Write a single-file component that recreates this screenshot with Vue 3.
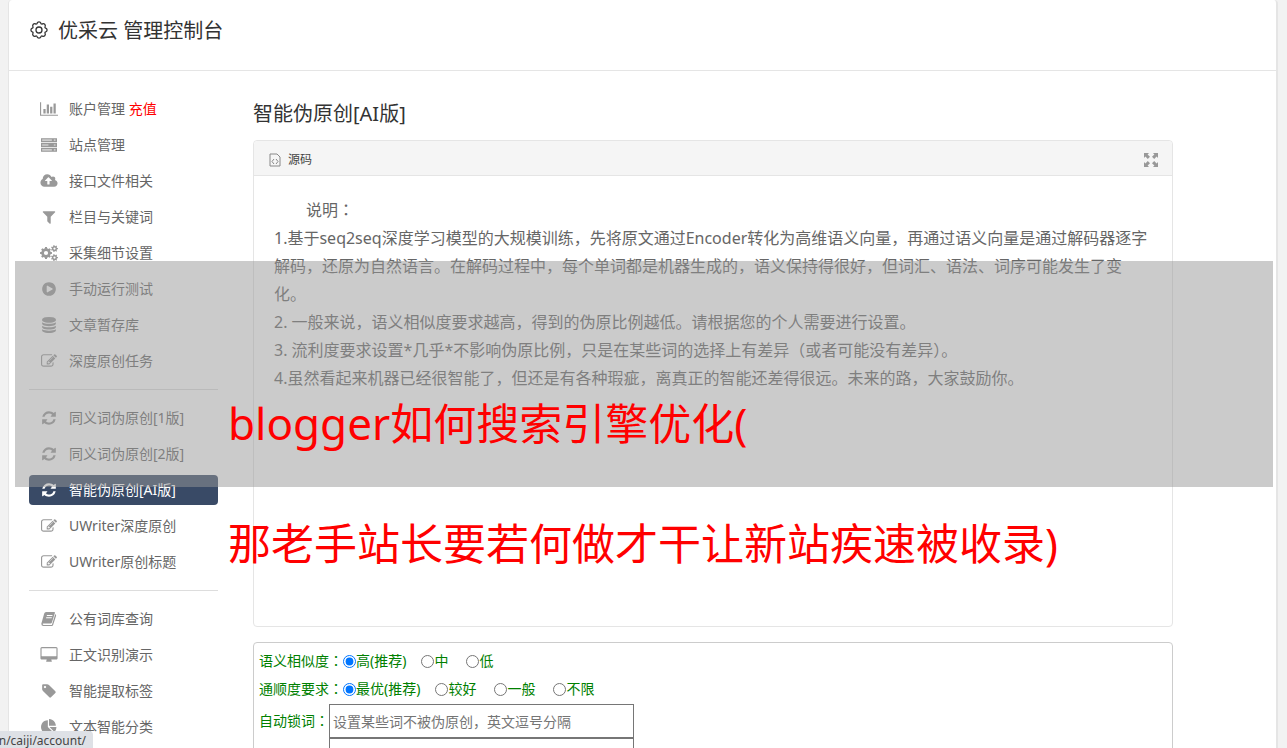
<script setup>
const icons = {
  chart: { box: '0 0 2048 1792', d: 'M640 896v512h-256v-512h256zm384-512v1024h-256v-1024h256zm1024 1152v128h-2048v-1536h128v1408h1920zm-640-896v768h-256v-768h256zm384-384v1152h-256v-1152h256z' },
  server: { box: '0 0 1792 1792', soft: 'M64 192h1664v320h-1664zM64 736h1664v320h-1664zM64 1280h1664v320h-1664z', d: 'M0 128h1792v448h-1792zM128 256v192h1088v-192zM1440 256v192h192v-192zM0 672h1792v448h-1792zM128 800v192h704v-192zM1440 800v192h192v-192zM0 1216h1792v448h-1792zM128 1344v192h1088v-192zM1440 1344v192h192v-192z' },
  cloud: { box: '0 0 1920 1792', d: 'M1280 864q0-14-9-23l-352-352q-9-9-23-9t-23 9l-351 351q-10 12-10 24 0 14 9 23t23 9h224v352q0 13 9.500 22.500t22.500 9.500h192q13 0 22.500-9.500t9.500-22.500v-352h224q13 0 22.500-9.500t9.500-22.500zm640 288q0 159-112.500 271.500t-271.500 112.500h-1088q-185 0-316.500-131.500t-131.500-316.500q0-130 70-240t188-165q-2-30-2-43 0-212 150-362t362-150q156 0 285.500 87t188.500 231q71-62 166-62 106 0 181 75t75 181q0 76-41 138 130 31 213.500 135.500t83.500 238.500z' },
  filter: { box: '0 0 1792 1792', d: 'M1595 295q17 41-14 70l-493 493v742q0 42-39 59-13 5-25 5-27 0-45-19l-256-256q-19-19-19-45v-486l-493-493q-31-29-14-70 17-39 59-39h1280q42 0 59 39z' },
  cogs: { box: '0 0 18 16', d: '' },
  play: { box: '0 0 1792 1792', d: 'M896 128q209 0 385.500 103t279.500 279.500 103 385.500-103 385.500-279.500 279.500-385.500 103-385.500-103-279.500-279.500-103-385.500 103-385.500 279.500-279.500 385.500-103zm384 823q32-18 32-55t-32-55l-544-320q-31-19-64-1-32 19-32 56v640q0 37 32 56 16 8 32 8 17 0 32-9z' },
  database: { box: '0 0 1792 1792', d: 'M896 768q237 0 443-43t325-127v170q0 69-103 128t-280 93.500-385 34.500-385-34.500-280-93.500-103-128v-170q119 84 325 127t443 43zm0 768q237 0 443-43t325-127v170q0 69-103 128t-280 93.500-385 34.500-385-34.500-280-93.500-103-128v-170q119 84 325 127t443 43zm0-384q237 0 443-43t325-127v170q0 69-103 128t-280 93.500-385 34.500-385-34.500-280-93.500-103-128v-170q119 84 325 127t443 43zm0-1152q208 0 385 34.500t280 93.500 103 128v128q0 69-103 128t-280 93.500-385 34.500-385-34.500-280-93.500-103-128v-128q0-69 103-128t280-93.500 385-34.500z' },
  edit: { box: '0 0 1792 1792', d: 'M888 1184l116-116-152-152-116 116v56h96v96h56zm440-720q-16-16-33 1l-350 350q-17 17-1 33t33-1l350-350q17-17 1-33zm80 594v190q0 119-84.500 203.500t-203.500 84.500h-832q-119 0-203.500-84.500t-84.500-203.500v-832q0-119 84.500-203.500t203.500-84.500h832q63 0 117 25 15 7 18 23 3 17-9 29l-49 49q-14 14-32 8-23-6-45-6h-832q-66 0-113 47t-47 113v832q0 66 47 113t113 47h832q66 0 113-47t47-113v-126q0-13 9-22l64-64q15-15 35-7t20 29zm-96-738l288 288-672 672h-288v-288zm444 132l-92 92-288-288 92-92q28-28 68-28t68 28l152 152q28 28 28 68t-28 68z' },
  refresh: { box: '0 0 1792 1792', d: 'M1639 1056q0 5-1 7-64 268-268 434.500t-478 166.500q-146 0-282.500-55t-243.500-157l-129 129q-19 19-45 19t-45-19-19-45v-448q0-26 19-45t45-19h448q26 0 45 19t19 45-19 45l-137 137q71 66 161 102t187 36q134 0 250-65t186-179q11-17 53-117 8-23 30-23h192q13 0 22.500 9.500t9.500 22.500zm25-800v448q0 26-19 45t-45 19h-448q-26 0-45-19t-19-45 19-45l138-138q-148-137-349-137-134 0-250 65t-186 179q-11 17-53 117-8 23-30 23h-199q-13 0-22.500-9.500t-9.500-22.500v-7q65-268 270-434.500t480-166.500q146 0 284 55.500t245 156.500l130-129q19-19 45-19t45 19 19 45z' },
  book: { box: '0 0 16 16', d: 'M5 1h8.200q1 0 .7 1l-3 9.600q-.3 1-1.300 1H2.200q-.7 0-.5.700.2.700 1 .7h8.200l3.300-10.700q1.200.4.900 1.500l-2.900 9q-.4 1.200-1.500 1.200H2.400Q.3 15 .3 12.800L3.200 2.500Q3.700 1 5 1zM6 4l-.3 1h5.600l.3-1zM5.300 6.200l-.3 1h5.600l.3-1z' },
  desktop: { box: '0 0 1920 1792', d: 'M1792 992v-832q0-13-9.500-22.500t-22.500-9.500h-1600q-13 0-22.500 9.500t-9.500 22.500v832q0 13 9.500 22.500t22.500 9.500h1600q13 0 22.500-9.500t9.500-22.500zm128-832v1088q0 66-47 113t-113 47h-544q0 37 16 77.500t32 71 16 43.500q0 26-19 45t-45 19h-512q-26 0-45-19t-19-45q0-14 16-44t32-70 16-78h-544q-66 0-113-47t-47-113v-1088q0-66 47-113t113-47h1600q66 0 113 47t47 113z' },
  tag: { box: '0 0 1792 1792', d: 'M576 448q0-53-37.500-90.500t-90.500-37.500-90.500 37.500-37.500 90.500 37.500 90.500 90.500 37.500 90.500-37.500 37.500-90.500zm1067 576q0 53-37 90l-491 492q-39 37-91 37-53 0-90-37l-715-716q-38-37-64.500-101t-26.500-117v-416q0-52 38-90t90-38h416q53 0 117 26.500t102 64.500l715 714q37 39 37 91z' },
  pie: { box: '0 0 1792 1792', d: 'M768 890l546 546q-106 108-247.500 168t-298.500 60q-209 0-385.500-103t-279.500-279.500-103-385.500 103-385.500 279.500-279.500 385.500-103v762zm187 6h773q0 157-60 298.500t-168 247.500zm709-128h-768v-768q209 0 385.500 103t279.500 279.500 103 385.500z' }
}

// Toothed wheel: n flat teeth between radii r1 and r2, with a round hole.
function cog(cx, cy, r1, r2, hole, n) {
  const step = (Math.PI * 2) / n
  const pt = (r, a) => `${(cx + r * Math.cos(a)).toFixed(2)} ${(cy + r * Math.sin(a)).toFixed(2)}`
  let d = ''
  for (let i = 0; i < n; i++) {
    const a = i * step
    d += `${i ? 'L' : 'M'}${pt(r1, a - step * 0.3)}L${pt(r2, a - step * 0.2)}L${pt(r2, a + step * 0.2)}L${pt(r1, a + step * 0.3)}`
  }
  return `${d}zM${cx - hole} ${cy}a${hole} ${hole} 0 1 0 ${hole * 2} 0a${hole} ${hole} 0 1 0 ${-hole * 2} 0z`
}
icons.cogs.d = cog(6, 8, 4.8, 6, 2.1, 8) + cog(14.5, 3.6, 2.6, 3.5, 1.1, 7) + cog(14.5, 12.6, 2.6, 3.5, 1.1, 7)

// Outline gear with rounded lobes.
function lobes(c, r, n) {
  const step = (Math.PI * 2) / n
  let d = ''
  for (let i = 0; i <= n; i++) {
    const a = (i - 0.5) * step
    const p = (q) => `${(c + r * Math.cos(q)).toFixed(2)} ${(c + r * Math.sin(q)).toFixed(2)}`
    d += i ? `A2 2 0 0 1 ${p(a - 0.12)}A1 1 0 0 0 ${p(a + 0.12)}` : `M${p(a + 0.12)}`
  }
  return d + 'z'
}
const gear = lobes(9, 7, 8)

const groups = [
  [
    { icon: 'chart', text: '账户管理', extra: '充值' },
    { icon: 'server', text: '站点管理' },
    { icon: 'cloud', text: '接口文件相关' },
    { icon: 'filter', text: '栏目与关键词' },
    { icon: 'cogs', text: '采集细节设置' },
    { icon: 'play', text: '手动运行测试' },
    { icon: 'database', text: '文章暂存库' },
    { icon: 'edit', text: '深度原创任务' }
  ],
  [
    { icon: 'refresh', text: '同义词伪原创[1版]' },
    { icon: 'refresh', text: '同义词伪原创[2版]' },
    { icon: 'refresh', text: '智能伪原创[AI版]', active: true },
    { icon: 'edit', text: 'UWriter深度原创' },
    { icon: 'edit', text: 'UWriter原创标题' }
  ],
  [
    { icon: 'book', text: '公有词库查询' },
    { icon: 'desktop', text: '正文识别演示' },
    { icon: 'tag', text: '智能提取标签' },
    { icon: 'pie', text: '文本智能分类' }
  ]
]

const radios = [
  { name: 'similar', label: '语义相似度', options: ['高(推荐)', '中', '低'] },
  { name: 'fluent', label: '通顺度要求', options: ['最优(推荐)', '较好', '一般', '不限'] }
]
</script>

<template>
  <div class="page">
    <div class="panel">
      <header class="top">
        <svg class="gear" viewBox="0 0 18 18" aria-hidden="true">
          <path :d="gear" /><circle cx="9" cy="9" r="3" />
        </svg>
        <h1>优采云 管理控制台</h1>
      </header>

      <div class="body">
        <nav class="side">
          <ul v-for="(group, g) in groups" :key="g">
            <li v-for="item in group" :key="item.text">
              <a href="#" :class="{ active: item.active }">
                <svg class="ico" :viewBox="icons[item.icon].box" aria-hidden="true">
                  <path v-if="icons[item.icon].soft" class="soft" :d="icons[item.icon].soft" />
                  <path fill-rule="evenodd" :d="icons[item.icon].d" />
                </svg>
                <span>{{ item.text }} <em v-if="item.extra">{{ item.extra }}</em></span>
              </a>
            </li>
          </ul>
        </nav>

        <main class="main">
          <h2>智能伪原创[AI版]</h2>
          <section class="editor">
            <div class="bar">
              <button type="button" class="source">
                <svg viewBox="0 0 12 14" aria-hidden="true">
                  <path d="M1 1h7l3 3v9H1zM5 6L3 8.500 5 11M7 6l2 2.500L7 11" />
                </svg>
                源码
              </button>
              <button type="button" class="full" aria-label="全屏">
                <svg viewBox="0 0 14 14" aria-hidden="true">
                  <path d="M0 0h5L3.600 1.400 6 3.800 3.800 6 1.400 3.600 0 5zM14 0v5l-1.400-1.400L10.200 6 8 3.800l2.400-2.400L9 0zM0 14V9l1.400 1.400L3.800 8 6 10.200l-2.400 2.400L5 14zM14 14H9l1.400-1.400L8 10.200 10.200 8l2.400 2.400L14 9z" />
                </svg>
              </button>
            </div>
            <div class="text">
              <p class="lead">说明<span class="mid">：</span></p>
              <p>1.基于seq2seq深度学习模型的大规模训练，先将原文通过Encoder转化为高维语义向量，再通过语义向量是通过解码器逐字解码，还原为自然语言。在解码过程中，每个单词都是机器生成的，语义保持得很好，但词汇、语法、词序可能发生了变化。</p>
              <p>2. 一般来说，语义相似度要求越高，得到的伪原比例越低。请根据您的个人需要进行设置。</p>
              <p>3. 流利度要求设置*几乎*不影响伪原比例，只是在某些词的选择上有差异（或者可能没有差异）。</p>
              <p>4.虽然看起来机器已经很智能了，但还是有各种瑕疵，离真正的智能还差得很远。未来的路，大家鼓励你。</p>
            </div>
          </section>

          <form class="options">
            <div v-for="row in radios" :key="row.name" class="radios" role="radiogroup" :aria-label="row.label">
              <span>{{ row.label }}<span class="mid">：</span></span>
              <label v-for="(opt, i) in row.options" :key="opt">
                <input type="radio" :name="row.name" :value="opt" :checked="i === 0">{{ opt }}
              </label>
            </div>
            <div class="field">
              <label for="lock">自动锁词<span class="mid">：</span></label>
              <div class="inputs">
                <input id="lock" type="text" placeholder="设置某些词不被伪原创，英文逗号分隔">
                <input type="text" aria-label="自动锁词">
              </div>
            </div>
          </form>
        </main>
      </div>
    </div>

    <div class="band"></div>
    <div class="caption">
      <p><span class="latin">blogger</span>如何搜索引擎优化<span class="latin">(</span></p>
      <p>那老手站长要若何做才干让新站疾速被收录)</p>
    </div>
    <div class="status">n/caiji/account/</div>
  </div>
</template>

<style>
body { margin: 0; background: #f2f2f2; }
</style>

<style scoped>
.page {
  position: relative;
  box-sizing: border-box;
  height: 100vh;
  padding: 0 9px 0 8px;
  overflow: hidden;
  background: #f2f2f2;
  color: #666;
  font: 14px/20px "Noto Sans", "Noto Sans CJK SC", sans-serif;
}
h1, h2, p, ul { margin: 0; padding: 0; font-weight: 400; list-style: none; }
.mid { font-family: "Noto Sans CJK JP", sans-serif; line-height: 1; }
.panel {
  min-height: 100%;
  background: #fff;
  border: solid #e5e5e5;
  border-width: 0 2px 0 1px;
  border-radius: 4px 4px 0 0;
}
.top {
  display: flex;
  align-items: center;
  gap: 10px;
  height: 62px;
  padding: 0 21px 8px;
  border-bottom: 1px solid #e5e5e5;
  color: #333;
}
.top h1, .main h2 { font-size: 20px; line-height: 28px; color: #333; }
.gear { width: 18px; height: 18px; margin-bottom: 3px; fill: none; stroke: #333; stroke-width: 1.3; }
.body { display: flex; align-items: flex-start; gap: 35px; padding: 20px; }
.side { flex: 0 0 189px; }
.side ul + ul { margin-top: 10px; padding-top: 10px; border-top: 1px solid #ddd; }
.side li { padding: 3px 0; }
.side a {
  display: flex;
  align-items: center;
  gap: 11px;
  height: 30px;
  padding-left: 11px;
  border-radius: 4px;
  color: #666;
  text-decoration: none;
}
.side a.active { background: #394a66; color: #fff; }
.side em { color: #f00; font-style: normal; }
.ico { width: 18px; height: 16px; fill: #999; }
.ico .soft { fill: #ccc; }
.active .ico { fill: #fff; }
.main { flex: 1; max-width: 920px; min-width: 0; padding-top: 9px; }
.main h2 { margin-bottom: 12px; }
.editor { box-sizing: border-box; min-height: 487px; border: 1px solid #e5e5e5; border-radius: 4px; }
.bar {
  display: flex;
  justify-content: space-between;
  height: 31px;
  padding: 3px 14px 0 15px;
  background: #f5f5f5;
  border-bottom: 1px solid #e5e5e5;
  border-radius: 4px 4px 0 0;
}
.bar button {
  display: flex;
  align-items: center;
  gap: 7px;
  padding: 0;
  border: 0;
  background: none;
  color: #444;
  font: inherit;
  font-size: 12px;
}
.source svg { width: 12px; height: 14px; fill: none; stroke: #888; }
.full svg { width: 14px; height: 14px; fill: #999; }
.text { padding: 20px; font-size: 16px; line-height: 28px; }
.lead { text-indent: 2em; }
.options {
  box-sizing: border-box;
  margin-top: 15px;
  padding: 4px 5px;
  border: 1px solid #ccc;
  border-radius: 4px;
  color: #008000;
}
.radios { display: flex; align-items: center; height: 28px; }
.radios label { display: flex; align-items: center; margin-right: 15px; }
.radios label + label { margin-right: 18px; }
.radios input { width: 13px; height: 13px; margin: 0; }
.field { display: flex; margin-top: 1px; }
.field label { line-height: 34px; }
.inputs { display: flex; flex-direction: column; width: 305px; }
.inputs input {
  box-sizing: border-box;
  width: 100%;
  height: 34px;
  padding: 0 3px;
  border: 1px solid #767676;
  border-radius: 0;
  font: inherit;
}
.inputs input::placeholder { color: #757575; }
.band {
  position: absolute;
  top: 261px;
  left: 15px;
  right: 14px;
  height: 226px;
  background: rgba(152, 152, 152, 0.5);
}
.caption {
  position: absolute;
  top: 394px;
  left: 228px;
  color: #f00;
  font-size: 43px;
  line-height: 60px;
  white-space: nowrap;
}
.caption p + p { margin-top: 60px; }
.latin { font-size: 44px; line-height: 1; }
.status {
  position: absolute;
  left: 0;
  bottom: 0;
  display: flex;
  justify-content: flex-end;
  box-sizing: border-box;
  width: 93px;
  height: 17px;
  padding-right: 7px;
  background: #dee1e6;
  border-radius: 0 4px 0 0;
  color: #444;
  font-size: 12px;
  line-height: 20px;
}
</style>
